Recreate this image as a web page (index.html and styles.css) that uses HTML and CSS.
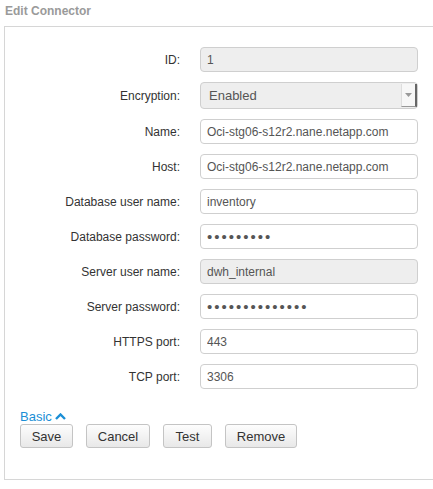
FILE: index.html
```html
<!DOCTYPE html>
<html>
<head>
<meta charset="utf-8">
<link rel="stylesheet" href="styles.css">
</head>
<body>
<div class="title">Edit Connector</div>
<div class="panel">
  <div class="form">
    <label class="lbl">ID:</label>
    <input class="field ro" type="text" value="1" readonly>
    <label class="lbl">Encryption:</label>
    <div class="selwrap">
      <select class="field sel"><option>Enabled</option></select>
      <span class="arrow"><svg width="7" height="4" viewBox="0 0 7 4"><path d="M0 0H7L3.5 4Z" fill="#9a9a9a"/></svg></span>
    </div>
    <label class="lbl">Name:</label>
    <input class="field" type="text" value="Oci-stg06-s12r2.nane.netapp.com">
    <label class="lbl">Host:</label>
    <input class="field" type="text" value="Oci-stg06-s12r2.nane.netapp.com">
    <label class="lbl">Database user name:</label>
    <input class="field" type="text" value="inventory">
    <label class="lbl">Database password:</label>
    <input class="field pw" type="password" value="123456789">
    <label class="lbl">Server user name:</label>
    <input class="field ro" type="text" value="dwh_internal" readonly>
    <label class="lbl">Server password:</label>
    <input class="field pw" type="password" value="12345678901234">
    <label class="lbl">HTTPS port:</label>
    <input class="field" type="text" value="443">
    <label class="lbl">TCP port:</label>
    <input class="field" type="text" value="3306">
  </div>
  <a class="basic" href="#">Basic <svg width="11" height="7" viewBox="0 0 11 7"><path d="M1 6L5.5 1.5L10 6" fill="none" stroke="#1b8fd6" stroke-width="2.4"/></svg></a>
  <div class="buttons">
    <button class="btn b-save">Save</button>
    <button class="btn b-cancel">Cancel</button>
    <button class="btn b-test">Test</button>
    <button class="btn b-remove">Remove</button>
  </div>
</div>
</body>
</html>
```
FILE: styles.css
```css
html, body {
  margin: 0;
  padding: 0;
  background: #fff;
  font-family: "Liberation Sans", Arial, sans-serif;
  font-size: 12px;
  color: #333;
  overflow: hidden;
}
.title {
  height: 26px;
  padding-left: 5px;
  box-sizing: border-box;
  padding-top: 4px;
  font-weight: bold;
  font-size: 12px;
  color: #9a9a9a;
  line-height: 14px;
}
.panel {
  margin-left: 4px;
  height: 454px;
  box-sizing: border-box;
  border: 1px solid #d6d6d6;
  border-right: none;
  padding-top: 20px;
}
.form {
  display: grid;
  grid-template-columns: 175px 218px;
  column-gap: 20px;
  row-gap: 10px;
  align-items: center;
}
.lbl {
  text-align: right;
  color: #333;
  font-size: 12px;
}
.field {
  box-sizing: border-box;
  height: 25px;
  width: 218px;
  margin: 0;
  border: 1px solid #cfcfcf;
  border-radius: 4px;
  padding: 0 6px;
  font-family: "Liberation Sans", Arial, sans-serif;
  font-size: 12px;
  color: #555;
  background: #fff;
  outline: none;
}
.ro { background: #eeeeee; }
.pw {
  font-size: 15px;
  letter-spacing: 2px;
  color: #555;
}
.selwrap {
  position: relative;
  width: 218px;
  height: 27px;
}
.sel {
  height: 27px;
  appearance: none;
  -webkit-appearance: none;
  background: #eeeeee;
  font-size: 13px;
  padding-left: 8px;
}
.arrow {
  position: absolute;
  right: 1px;
  top: 2px;
  width: 13px;
  height: 22px;
  background: #f7f7f7;
  border-left: 1px solid #ddd;
  border-right: 2px solid #666;
  border-bottom: 1px solid #999;
  display: flex;
  align-items: center;
  justify-content: center;
}
.basic {
  display: block;
  margin: 20px 0 0 15px;
  width: max-content;
  color: #1b8fd6;
  text-decoration: none;
  font-size: 13px;
  line-height: 15px;
}
.basic svg { vertical-align: 1px; }
.buttons {
  display: flex;
  gap: 13px;
  margin-left: 15px;
  margin-top: 0;
}
.btn {
  box-sizing: border-box;
  height: 24px;
  border: 1px solid #c4c4c4;
  border-radius: 3px;
  background: linear-gradient(#fdfdfd, #e8e8e8);
  font-family: "Liberation Sans", Arial, sans-serif;
  font-size: 13px;
  color: #333;
  padding: 0;
}
.b-save { width: 53px; }
.b-cancel { width: 64px; }
.b-test { width: 49px; }
.b-remove { width: 72px; }
```
